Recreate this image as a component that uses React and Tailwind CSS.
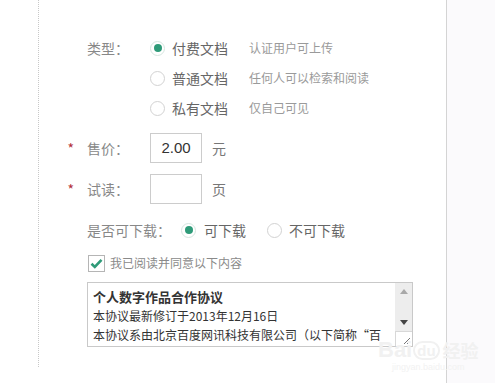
import React from 'react'

const font = { fontFamily: '"Noto Sans CJK SC", "Noto Sans", sans-serif' }

function Radio({ checked }) {
  return (
    <span className={`flex h-[15px] w-[15px] shrink-0 items-center justify-center rounded-full border bg-white ${checked ? 'border-[#d6e6e0]' : 'border-[#d2d2d2]'}`}>
      {checked && <span className="h-[8px] w-[8px] rounded-full bg-[#2f9b79]" />}
    </span>
  )
}

function Label({ required, children }) {
  return (
    <div className="flex w-[111px] shrink-0 items-center">
      <span className="w-[48px] pr-[13px] text-right text-[14px] text-[#b2303a]">{required ? '*' : ''}</span>
      <span className="text-[14px] text-[#888]">{children}</span>
    </div>
  )
}

function TypeOption({ label, checked, title, desc }) {
  return (
    <div className="flex h-[30px] items-center">
      <Label>{label}</Label>
      <Radio checked={checked} />
      <span className="ml-[7px] w-[77px] text-[14px] text-[#666]">{title}</span>
      <span className="text-[12px] text-[#9a9a9a]">{desc}</span>
    </div>
  )
}

export default function App() {
  return (
    <div className="relative flex h-[383px] w-[495px] overflow-hidden bg-white" style={font}>
      <div className="h-full w-[447px] shrink-0 border-r border-[#d4d4d4] pl-[38px]">
        <div className="h-[367px] border-l border-dotted border-[#c8c8c8] pt-[33px]">
          {/* type */}
          <TypeOption label="类型：" checked title="付费文档" desc="认证用户可上传" />
          <TypeOption title="普通文档" desc="任何人可以检索和阅读" />
          <TypeOption title="私有文档" desc="仅自己可见" />

          {/* price */}
          <div className="mt-[10px] flex h-[30px] items-center">
            <Label required>售价：</Label>
            <div className="flex h-[30px] w-[52px] items-center justify-center border border-[#cccccc] text-[15px] text-[#333]" style={{ fontFamily: '"Liberation Sans", sans-serif' }}>2.00</div>
            <span className="ml-[10px] text-[14px] text-[#777]">元</span>
          </div>

          {/* trial */}
          <div className="mt-[11px] flex h-[30px] items-center">
            <Label required>试读：</Label>
            <div className="h-[30px] w-[52px] border border-[#cccccc]" />
            <span className="ml-[10px] text-[14px] text-[#777]">页</span>
          </div>

          {/* download */}
          <div className="mt-[11px] flex h-[30px] items-center pl-[48px]">
            <span className="text-[14px] text-[#888]">是否可下载：</span>
            <span className="ml-[10px]"><Radio checked /></span>
            <span className="ml-[8px] text-[14px] text-[#666]">可下载</span>
            <span className="ml-[21px]"><Radio /></span>
            <span className="ml-[7px] text-[14px] text-[#666]">不可下载</span>
          </div>

          {/* agree */}
          <div className="mt-[9px] flex h-[18px] items-center pl-[49px]">
            <span className="flex h-[17px] w-[17px] items-center justify-center border border-[#b5b5b5] bg-white">
              <svg width="13" height="11" viewBox="0 0 13 11">
                <path d="M1.5 5.8 L4.8 9 L11.5 1.8" fill="none" stroke="#2f9b79" strokeWidth="2.6" />
              </svg>
            </span>
            <span className="ml-[5px] text-[12px] text-[#8a8a8a]">我已阅读并同意以下内容</span>
          </div>

          {/* agreement box */}
          <div className="ml-[48px] mt-[10px] flex h-[65px] w-[326px] border border-[#c9c9c9]">
            <div className="flex-1 overflow-hidden pl-[5px] pt-[5px] text-[#333]">
              <div className="whitespace-nowrap text-[13px] font-bold leading-[18px]">个人数字作品合作协议</div>
              <div className="whitespace-nowrap text-[12px] leading-[19px]">本协议最新修订于2013年12月16日</div>
              <div className="whitespace-nowrap text-[12px] leading-[19px]">本协议系由北京百度网讯科技有限公司（以下简称“百</div>
            </div>
            <div className="flex w-[17px] flex-col bg-[#ededed]">
              <div className="flex h-[17px] items-center justify-center">
                <svg width="8" height="5" viewBox="0 0 8 5"><path d="M0 5 L4 0 L8 5 Z" fill="#a8a8a8" /></svg>
              </div>
              <div className="flex-1" />
              <div className="flex h-[17px] items-center justify-center">
                <svg width="8" height="5" viewBox="0 0 8 5"><path d="M0 0 L8 0 L4 5 Z" fill="#444" /></svg>
              </div>
              <div className="flex h-[15px] items-end justify-end border-t border-l border-[#d8d8d8] bg-white pb-[1px] pr-[1px]">
                <svg width="8" height="8" viewBox="0 0 8 8">
                  <path d="M7 1 L1 7 M7 4 L4 7" stroke="#777" strokeWidth="1" />
                </svg>
              </div>
            </div>
          </div>
        </div>
      </div>
      <div className="h-full flex-1 bg-[#fbfafc]" />

      {/* watermark */}
      <div className="pointer-events-none absolute left-[378px] top-[339px] flex flex-col items-center leading-none">
        <div className="flex items-center text-[22px] font-bold text-[#f1f1f1]" style={{ fontFamily: '"Liberation Sans", sans-serif' }}>
          <span>Bai</span>
          <span className="ml-[1px] rounded-full border-2 border-[#f1f1f1] px-[2px] text-[15px]">du</span>
          <span className="ml-[3px] text-[18px]" style={font}>经验</span>
        </div>
        <div className="mt-[2px] text-[9px] text-[#f2f2f2]" style={{ fontFamily: '"Liberation Sans", sans-serif' }}>jingyan.baidu.com</div>
      </div>
    </div>
  )
}
